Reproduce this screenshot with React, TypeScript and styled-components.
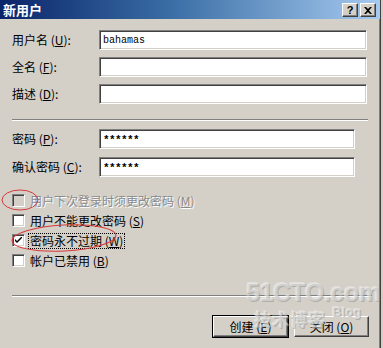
import styled, { createGlobalStyle, css } from 'styled-components';

const GlobalStyle = createGlobalStyle`
  html, body {
    margin: 0;
    padding: 0;
    background: #d4d0c8;
  }
  body {
    font-family: "Noto Sans CJK SC", "Liberation Sans", sans-serif;
    font-size: 12px;
    color: #000;
  }
`;

const raised = css`
  border-top: 1px solid #fff;
  border-left: 1px solid #fff;
  border-right: 1px solid #404040;
  border-bottom: 1px solid #404040;
  box-shadow: inset -1px -1px 0 #808080;
`;

const sunken = css`
  border-top: 1px solid #808080;
  border-left: 1px solid #808080;
  border-right: 1px solid #fff;
  border-bottom: 1px solid #fff;
  box-shadow: inset 1px 1px 0 #404040, inset -1px -1px 0 #d4d0c8;
`;

const Window = styled.div`
  position: relative;
  width: 380px;
  height: 348px;
  background: #d4d0c8;
  border-right: 1px solid #404040;
  box-shadow: inset -1px 0 0 #808080;
  overflow: hidden;
`;

const TitleBar = styled.div`
  height: 19px;
  display: flex;
  align-items: center;
  justify-content: space-between;
  padding: 0 4px 0 3px;
  background: linear-gradient(90deg, #0a246a 0%, #3a6ea5 45%, #a6caf0 100%);
`;

const Title = styled.span`
  color: #fff;
  font-weight: 700;
  font-size: 13px;
  line-height: 19px;
`;

const CaptionButtons = styled.div`
  display: flex;
  gap: 2px;
  margin-top: 1px;
`;

const CaptionButton = styled.div`
  ${raised};
  width: 14px;
  height: 12px;
  background: #d4d0c8;
  display: flex;
  align-items: center;
  justify-content: center;
  font-family: "Liberation Sans", sans-serif;
  font-weight: 700;
  font-size: 11px;
  line-height: 1;
`;

const Body = styled.div`
  padding: 11px 0 0 12px;
`;

const FieldGrid = styled.div<{ $inputWidth: number; $gap: number }>`
  display: grid;
  grid-template-columns: 87px ${({ $inputWidth }) => $inputWidth}px;
  row-gap: ${({ $gap }) => $gap}px;
  align-items: center;
`;

const Label = styled.span`
  white-space: nowrap;
  line-height: 20px;
`;

const Key = styled.u`
  text-underline-offset: 1px;
`;

const TextBox = styled.div<{ $password?: boolean }>`
  ${sunken};
  box-sizing: border-box;
  height: 20px;
  background: #fff;
  padding: 0 3px;
  display: flex;
  align-items: center;
  font-family: "Liberation Mono", monospace;
  font-size: 10px;
  ${({ $password }) =>
    $password &&
    css`
      font-weight: 700;
      font-size: 11px;
      letter-spacing: -0.6px;
      padding-top: 2px;
    `}
`;

const Separator = styled.div<{ $top: number; $width: number }>`
  margin-top: ${({ $top }) => $top}px;
  width: ${({ $width }) => $width}px;
  height: 0;
  border-top: 1px solid #808080;
  border-bottom: 1px solid #fff;
`;

const ChecksWrap = styled.div`
  margin-top: 8px;
`;

const CheckList = styled.div`
  display: flex;
  flex-direction: column;
  gap: 7px;
  margin-top: 17px;
`;

const CheckRow = styled.div<{ $disabled?: boolean }>`
  display: flex;
  align-items: center;
  gap: 4px;
  height: 13px;
  color: ${({ $disabled }) => ($disabled ? '#8a8a8a' : '#000')};
  text-shadow: ${({ $disabled }) => ($disabled ? '1px 1px 0 #fff' : 'none')};
`;

const Box = styled.div<{ $disabled?: boolean }>`
  ${sunken};
  box-sizing: border-box;
  width: 13px;
  height: 13px;
  flex-shrink: 0;
  background: ${({ $disabled }) => ($disabled ? '#d4d0c8' : '#fff')};
  display: flex;
  align-items: center;
  justify-content: center;
`;

const CheckText = styled.span<{ $focused?: boolean }>`
  line-height: 14px;
  padding: 0 1px;
  outline: ${({ $focused }) => ($focused ? '1px dotted #000' : 'none')};
`;

const ButtonRow = styled.div`
  display: flex;
  justify-content: flex-end;
  gap: 6px;
  margin-top: 19px;
  padding-right: 11px;
`;

const Button = styled.div<{ $default?: boolean }>`
  ${raised};
  box-sizing: border-box;
  width: 75px;
  height: 21px;
  background: #d4d0c8;
  display: flex;
  align-items: center;
  justify-content: center;
  ${({ $default }) =>
    $default &&
    css`
      outline: 1px solid #000;
    `}
`;

const Watermark = styled.div`
  position: absolute;
  left: 246px;
  top: 279px;
  pointer-events: none;
  color: rgba(232, 232, 232, 0.5);
  text-shadow: 1px 1px 0 rgba(120, 120, 120, 0.4), -1px -1px 0 rgba(255, 255, 255, 0.35);
`;

const WatermarkLogo = styled.div`
  font-family: "Liberation Sans", sans-serif;
  font-weight: 700;
  font-size: 25px;
  line-height: 27px;
  letter-spacing: -0.5px;
`;

const WatermarkSub = styled.div`
  display: flex;
  align-items: flex-start;
  gap: 6px;
  margin-top: 2px;
  padding-left: 8px;
`;

const WatermarkCn = styled.span`
  font-size: 17px;
  line-height: 22px;
  font-weight: 700;
  letter-spacing: 1px;
`;

const WatermarkBlog = styled.span`
  font-family: "Liberation Sans", sans-serif;
  font-size: 13px;
  font-weight: 700;
  line-height: 13px;
  margin-top: -3px;
`;

const Marks = styled.svg`
  position: absolute;
  left: 0;
  top: 0;
  pointer-events: none;
`;

const Check = () => (
  <svg width="7" height="7" viewBox="0 0 7 7">
    <path d="M0 2 L0 4 L2 6 L7 1 L7 -1 L2 4 Z" fill="#000" />
  </svg>
);

export default function App() {
  return (
    <>
      <GlobalStyle />
      <Window>
        <TitleBar>
          <Title>新用户</Title>
          <CaptionButtons>
            <CaptionButton>?</CaptionButton>
            <CaptionButton>
              <svg width="8" height="7" viewBox="0 0 8 7">
                <path d="M0 0h2l2 2 2-2h2L5 3.5 8 7H6L4 5 2 7H0l3-3.5z" fill="#000" />
              </svg>
            </CaptionButton>
          </CaptionButtons>
        </TitleBar>
        <Body>
          <FieldGrid $inputWidth={268} $gap={7}>
            <Label>
              用户名 (<Key>U</Key>):
            </Label>
            <TextBox>bahamas</TextBox>
            <Label>
              全名 (<Key>F</Key>):
            </Label>
            <TextBox />
            <Label>
              描述 (<Key>D</Key>):
            </Label>
            <TextBox />
          </FieldGrid>
          <Separator $top={15} $width={356} />
          <ChecksWrap>
            <FieldGrid $inputWidth={256} $gap={8}>
              <Label>
                密码 (<Key>P</Key>):
              </Label>
              <TextBox $password>******</TextBox>
              <Label>
                确认密码 (<Key>C</Key>):
              </Label>
              <TextBox $password>******</TextBox>
            </FieldGrid>
          </ChecksWrap>
          <CheckList>
            <CheckRow $disabled>
              <Box $disabled />
              <CheckText>
                用户下次登录时须更改密码 (<Key>M</Key>)
              </CheckText>
            </CheckRow>
            <CheckRow>
              <Box />
              <CheckText>
                用户不能更改密码 (<Key>S</Key>)
              </CheckText>
            </CheckRow>
            <CheckRow>
              <Box>
                <Check />
              </Box>
              <CheckText $focused>
                密码永不过期 (<Key>W</Key>)
              </CheckText>
            </CheckRow>
            <CheckRow>
              <Box />
              <CheckText>
                帐户已禁用 (<Key>B</Key>)
              </CheckText>
            </CheckRow>
          </CheckList>
          <Separator $top={28} $width={360} />
        </Body>
        <ButtonRow>
          <Button $default>
            创建 (<Key>E</Key>)
          </Button>
          <Button>
            关闭 (<Key>O</Key>)
          </Button>
        </ButtonRow>
        <Watermark>
          <WatermarkLogo>51CTO.com</WatermarkLogo>
          <WatermarkSub>
            <WatermarkCn>技术博客</WatermarkCn>
            <WatermarkBlog>Blog</WatermarkBlog>
          </WatermarkSub>
        </Watermark>
        <Marks width="383" height="348">
          <ellipse cx="20" cy="200" rx="18" ry="10" fill="none" stroke="#d83a3a" strokeWidth="1" />
          <ellipse cx="64" cy="238" rx="52" ry="13" fill="none" stroke="#d83a3a" strokeWidth="1" transform="rotate(-3 64 238)" />
        </Marks>
      </Window>
    </>
  );
}
